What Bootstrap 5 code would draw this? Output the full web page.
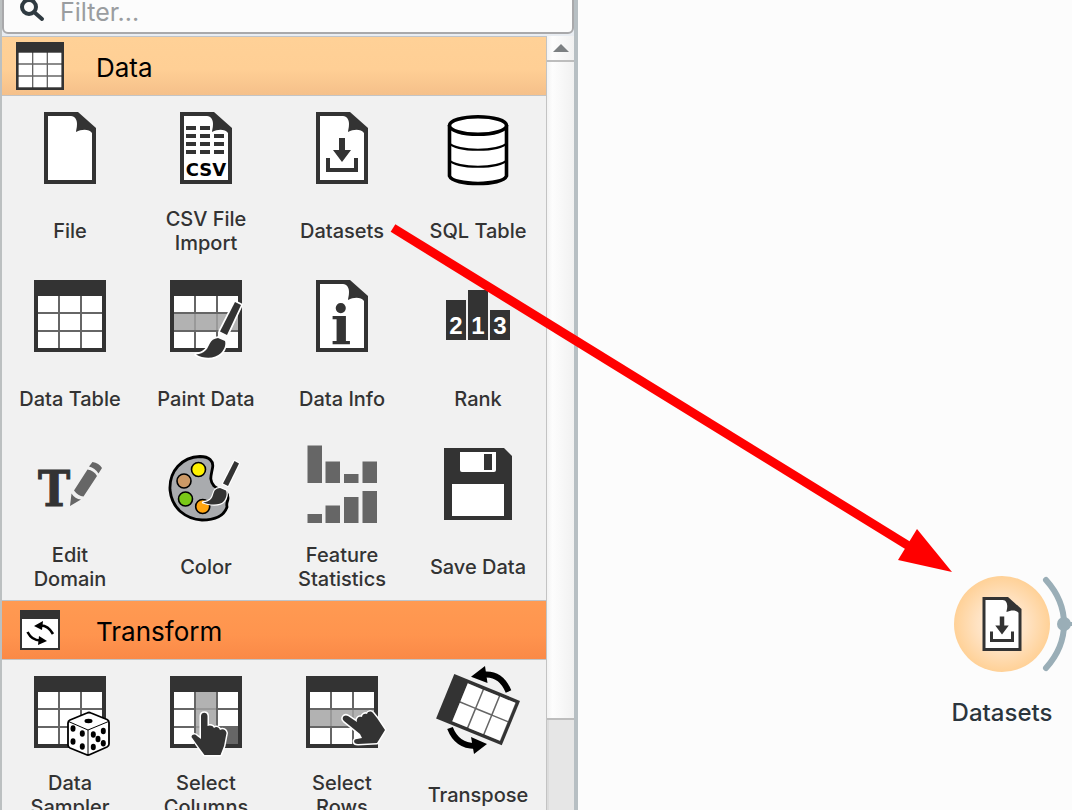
<!DOCTYPE html>
<html lang="en">
<head>
<meta charset="utf-8">
<meta name="viewport" content="width=device-width, initial-scale=1">
<title>Workflow editor</title>
<link href="https://cdn.jsdelivr.net/npm/bootstrap@5.3.0/dist/css/bootstrap.min.css" rel="stylesheet">
<style>
body { font-family: Inter, "Liberation Sans", sans-serif; background: #fcfcfc; color: #333; }
.toolbox { width: 578px; background: #e9edf2; border-left: 2px solid #bcc0c1; border-right: 4px solid #b7bfc3; }
.filter-box { height: 44px; margin-top: -10px; border: 2px solid #a9a9ab; border-radius: 6px; background: #fcfcfc; }
.filter-box input { font-size: 25px; line-height: 32px; color: #333; box-shadow: none; }
.filter-box input::placeholder { color: #9a9da0; opacity: 1; }
.tool-area { margin-top: 2px; }
.tool-list { background: #f1f1f1; }
.group-head { height: 60px; border-top: 1px solid #bfc3c8; border-bottom: 1px solid #c4c4c4; font-size: 26px; line-height: 32px; color: #000; padding-left: 14px; gap: 32px; }
.head-data { background: linear-gradient(#ffd197 0%, #ffcf95 55%, #f5c08a 100%); }
.head-transform { background: linear-gradient(#ff9a52 0%, #ff944e 60%, #fa8947 100%); }
.tool-grid { display: grid; grid-template-columns: repeat(4, 1fr); }
.tool { height: 168px; padding: 4px 0 0; font-size: 20px; font-weight: 500; line-height: 24px; color: #333; }
.tool-text { padding-top: 2px; }
.tool-label { max-width: 108px; }
.scroller { width: 28px; border-left: 1px solid #c3c3c3; background: #e6e6e6; box-shadow: inset 2px 0 #dcdcdc; }
.scroll-up { height: 26px; border-bottom: 2px solid #bdbdbd; }
.scroll-face { background: linear-gradient(90deg, #f3f3f3, #fdfdfd 20%, #f1f1f1); }
.scroll-thumb { height: 88%; border-bottom: 2px solid #bdbdbd; }
.node { left: 364px; top: 576px; width: 120px; }
.node-label { font-size: 24px; font-weight: 500; line-height: 28px; color: #2b353c; margin-top: 27px; }
.pointer-line { left: 0; top: 0; z-index: 5; pointer-events: none; }
</style>
<script src="https://cdn.jsdelivr.net/npm/bootstrap@5.3.0/dist/js/bootstrap.bundle.min.js"></script>
</head>
<body class="vh-100 overflow-hidden position-relative">
<svg width="0" height="0" class="position-absolute" aria-hidden="true">
  <symbol id="table" viewBox="0 0 96 96">
    <path fill="#333" d="M12 12h72v72H12z"/><path fill="#666" d="M16 28h64v52H16z"/>
    <path fill="#fff" d="M16 28h20v16H16zM38 28h20v16H38zM60 28h20v16H60zM16 46h20v16H16zM38 46h20v16H38zM60 46h20v16H60zM16 64h20v16H16zM38 64h20v16H38zM60 64h20v16H60z"/>
  </symbol>
  <symbol id="doc" viewBox="0 0 96 96">
    <path fill="#333" d="M22 12H56L74 28V84H22z"/>
    <path fill="#fff" d="M26 16H49C53 16 55 20 55 24C55 28 54 30 54 32C60 29 67 29 70 33V80H26z"/>
  </symbol>
  <symbol id="dataset" viewBox="0 0 96 96">
    <use href="#doc"/>
    <path fill="#333" d="M45 38h6v12h6L48 62L39 50h6zM32 58h4v10h24V58h4v14H32z"/>
  </symbol>
</svg>
<div class="d-flex h-100">
  <aside class="toolbox d-flex flex-column flex-shrink-0 h-100">
    <div class="filter-box d-flex align-items-center flex-shrink-0">
      <svg width="28" height="28" viewBox="0 0 28 28" class="ms-3 flex-shrink-0" fill="none" stroke="#2f3a41" aria-hidden="true"><circle cx="9" cy="9" r="7" stroke-width="4"/><path d="M14 14l8 7" stroke-width="4" stroke-linecap="round"/></svg>
      <input class="form-control border-0 bg-transparent p-0 ps-2 ms-1" type="text" placeholder="Filter..." aria-label="Filter">
    </div>
    <div class="tool-area d-flex flex-grow-1 overflow-hidden">
      <div class="tool-list flex-grow-1 overflow-hidden">
        <div class="group-head head-data d-flex align-items-center">
          <svg width="48" height="48" viewBox="12 12 72 72" aria-hidden="true"><use href="#table" width="96" height="96"/></svg>
          <span class="pt-1">Data</span>
        </div>
        <div class="tool-grid">
          <button type="button" class="tool btn border-0 rounded-0 d-flex flex-column align-items-center">
            <svg width="96" height="96" class="flex-shrink-0" viewBox="0 0 96 96"><use href="#doc"/></svg>
            <span class="tool-text flex-grow-1 d-flex align-items-center"><span class="tool-label">File</span></span>
          </button>
          <button type="button" class="tool btn border-0 rounded-0 d-flex flex-column align-items-center">
            <svg width="96" height="96" class="flex-shrink-0" viewBox="0 0 96 96"><use href="#doc"/><path fill="#333" d="M28 26h10v4H28zM42 26h10v4H42zM28 34h10v4H28zM42 34h10v4H42zM56 34h10v4H56zM28 42h10v4H28zM42 42h10v4H42zM56 42h10v4H56zM28 50h10v4H28zM42 50h10v4H42zM56 50h10v4H56z"/><text x="48" y="76" text-anchor="middle" font-family="DejaVu Sans, sans-serif" font-weight="700" font-size="18" fill="#000">CSV</text></svg>
            <span class="tool-text flex-grow-1 d-flex align-items-center"><span class="tool-label">CSV File Import</span></span>
          </button>
          <button type="button" class="tool btn border-0 rounded-0 d-flex flex-column align-items-center">
            <svg width="96" height="96" class="flex-shrink-0" viewBox="0 0 96 96"><use href="#dataset"/></svg>
            <span class="tool-text flex-grow-1 d-flex align-items-center"><span class="tool-label">Datasets</span></span>
          </button>
          <button type="button" class="tool btn border-0 rounded-0 d-flex flex-column align-items-center">
            <svg width="96" height="96" class="flex-shrink-0" viewBox="0 0 96 96"><g fill="#fff" stroke="#000" stroke-width="3.6"><path d="M19.500 25V76C23 86 73 86 76.500 76V25"/><ellipse cx="48" cy="25.500" rx="28.500" ry="8.800"/><path fill="none" stroke-width="2" d="M19 43C27 52 69 52 77 43M19 60C27 69 69 69 77 60"/></g></svg>
            <span class="tool-text flex-grow-1 d-flex align-items-center"><span class="tool-label text-nowrap">SQL Table</span></span>
          </button>
          <button type="button" class="tool btn border-0 rounded-0 d-flex flex-column align-items-center">
            <svg width="96" height="96" class="flex-shrink-0" viewBox="0 0 96 96"><use href="#table"/></svg>
            <span class="tool-text flex-grow-1 d-flex align-items-center"><span class="tool-label text-nowrap">Data Table</span></span>
          </button>
          <button type="button" class="tool btn border-0 rounded-0 d-flex flex-column align-items-center">
            <svg width="96" height="96" class="flex-shrink-0 overflow-visible" viewBox="0 0 96 96"><use href="#table"/><path fill="#b2b2b2" d="M16 46h64v16H16z"/><path fill="#999" d="M36 46h2v16h-2zM58 46h2v16h-2z"/><g fill="#333" stroke="#fff" stroke-width="3.500" stroke-linejoin="round" paint-order="stroke"><path d="M77 34L83 37L69 67L62 63.500z"/><path d="M60 70C51 71 52 78 48 82C45 85 42 86 38 86.500C46 91 57 91 63 85C67 81 68 76 67 73z"/></g></svg>
            <span class="tool-text flex-grow-1 d-flex align-items-center"><span class="tool-label text-nowrap">Paint Data</span></span>
          </button>
          <button type="button" class="tool btn border-0 rounded-0 d-flex flex-column align-items-center">
            <svg width="96" height="96" class="flex-shrink-0" viewBox="0 0 96 96"><use href="#doc"/><text x="47" y="76" text-anchor="middle" font-family="DejaVu Serif, serif" font-weight="700" font-size="54" fill="#333">i</text></svg>
            <span class="tool-text flex-grow-1 d-flex align-items-center"><span class="tool-label text-nowrap">Data Info</span></span>
          </button>
          <button type="button" class="tool btn border-0 rounded-0 d-flex flex-column align-items-center">
            <svg width="96" height="96" class="flex-shrink-0" viewBox="0 0 96 96"><path fill="#333" d="M16 32h20v40H16zM38 22h20v50H38zM60 42h20v30H60z"/><g font-family="Liberation Sans, sans-serif" font-weight="700" font-size="24" fill="#fff" text-anchor="middle"><text x="26" y="66">2</text><text x="48" y="66">1</text><text x="70" y="66">3</text></g></svg>
            <span class="tool-text flex-grow-1 d-flex align-items-center"><span class="tool-label">Rank</span></span>
          </button>
          <button type="button" class="tool btn border-0 rounded-0 d-flex flex-column align-items-center">
            <svg width="96" height="96" class="flex-shrink-0" viewBox="0 0 96 96"><text x="32" y="70" text-anchor="middle" font-family="DejaVu Serif Condensed, DejaVu Serif, serif" font-weight="700" font-size="48" fill="#333" stroke="#333">T</text><path fill="#666" d="M70.500 26Q77 27 80 32L76.500 37.500Q73 32 67 30.500zM65.500 33.500Q72 34.500 75 40L61.500 60.500Q56 60 52 54.500zM49.500 57.500Q53 63 59 63.500L48 70z"/></svg>
            <span class="tool-text flex-grow-1 d-flex align-items-center"><span class="tool-label">Edit<br>Domain</span></span>
          </button>
          <button type="button" class="tool btn border-0 rounded-0 d-flex flex-column align-items-center">
            <svg width="96" height="96" class="flex-shrink-0" viewBox="0 0 96 96"><path fill="#a9abae" stroke="#000" stroke-width="2.800" d="M42 20.500C51 20.500 56 25 54.500 32C53 40 51 44 56 50C62 55 70 53 70 62C70 66 68 66 69 71C66 80 57 84 44 84C28 83 14 73 12 54C11 35 24 21 42 20.500z"/><g stroke="#000" stroke-width="1.600"><circle cx="40.500" cy="33.500" r="7" fill="#fff200"/><circle cx="26" cy="45" r="7" fill="#c96"/><circle cx="27.500" cy="63" r="7" fill="#7ac917"/><circle cx="44.700" cy="70.500" r="7" fill="#ffa510"/></g><g fill="#333" stroke="#fff" stroke-width="2.400" stroke-linejoin="round" paint-order="stroke"><path d="M76.500 25L81 27.500L70 50L65 47.500z"/><path d="M62 52C54 53 57 58 53 63C51 65 49 66 45 66.500C51 69 62 70 66 65C69 61 69 57 68 54.500z"/></g></svg>
            <span class="tool-text flex-grow-1 d-flex align-items-center"><span class="tool-label">Color</span></span>
          </button>
          <button type="button" class="tool btn border-0 rounded-0 d-flex flex-column align-items-center">
            <svg width="96" height="96" class="flex-shrink-0" viewBox="0 0 96 96"><path fill="#666" d="M13.500 9.500H28V47H13.500zM31.500 25.500H46V47H31.500zM50 38H64.500V47H50zM68.500 25.500H83V47H68.500zM13.500 78H28V87H13.500zM31.500 69.500H46V87H31.500zM50 61H64.500V87H50zM68.500 55H83V87H68.500z"/></svg>
            <span class="tool-text flex-grow-1 d-flex align-items-center"><span class="tool-label">Feature Statistics</span></span>
          </button>
          <button type="button" class="tool btn border-0 rounded-0 d-flex flex-column align-items-center">
            <svg width="96" height="96" class="flex-shrink-0" viewBox="0 0 96 96"><path fill="#333" d="M14 12H74L82 20V84H14z"/><path fill="#fff" d="M30 16H66V34q0 2-2 2H32q-2 0-2-2zM22 48H74V80H22z"/><path fill="#333" d="M54 18h8v16h-8z"/></svg>
            <span class="tool-text flex-grow-1 d-flex align-items-center"><span class="tool-label text-nowrap">Save Data</span></span>
          </button>
        </div>
        <div class="group-head head-transform d-flex align-items-center">
          <svg width="48" height="48" viewBox="0 0 48 48" aria-hidden="true"><path fill="#333" d="M4 4h40v40H4z"/><path fill="#fff" d="M6 13h36v29H6z"/><path fill="none" stroke="#000" stroke-width="2.600" d="M24 19.500Q32 19 37 28M11.500 26Q16 34.500 24 34.500"/><path d="M18 20L27 15L26 24zM31 35L23 30L22 39z"/></svg>
          <span class="pt-1">Transform</span>
        </div>
        <div class="tool-grid">
          <button type="button" class="tool btn border-0 rounded-0 d-flex flex-column align-items-center">
            <svg width="96" height="96" class="flex-shrink-0" viewBox="0 0 96 96"><use href="#table"/><path fill="#fff" stroke="#000" stroke-width="1.800" stroke-linejoin="round" d="M65 49Q67 48 69 49L85 55.500Q87 56.500 87 58.500V80Q87 82 85 83L68 90.500Q66 91.500 64 90.500L48 84Q46 83 46 81V59Q46 57 48 56z"/><path fill="none" stroke="#000" d="M46.500 57.500L66 66L86.500 57.500M66 66V91"/><ellipse cx="66.500" cy="57" rx="4" ry="2.200"/><g><ellipse cx="51" cy="64.500" rx="2.500" ry="3.300"/><ellipse cx="60.300" cy="69.500" rx="2.500" ry="3.300"/><ellipse cx="51" cy="77.500" rx="2.500" ry="3.300"/><ellipse cx="60.300" cy="82.500" rx="2.500" ry="3.300"/><ellipse cx="71.300" cy="70.500" rx="2.500" ry="3.300"/><ellipse cx="81.300" cy="67" rx="2.500" ry="3.300"/><ellipse cx="76" cy="75" rx="2.500" ry="3.300"/><ellipse cx="71.300" cy="83" rx="2.500" ry="3.300"/><ellipse cx="81.300" cy="79.300" rx="2.500" ry="3.300"/></g></svg>
            <span class="tool-text flex-grow-1 d-flex align-items-center"><span class="tool-label">Data<br>Sampler</span></span>
          </button>
          <button type="button" class="tool btn border-0 rounded-0 d-flex flex-column align-items-center">
            <svg width="96" height="96" class="flex-shrink-0" viewBox="0 0 96 96"><use href="#table"/><path fill="#b2b2b2" d="M38 28h20v52H38z"/><path fill="#999" d="M38 44h20v2H38zM38 62h20v2H38z"/><path fill="#666" d="M60 64h20v16H60z"/><path fill="#333" stroke="#fff" stroke-width="3" paint-order="stroke" stroke-linejoin="round" d="M43 52C43 47.500 49.500 47.500 49.500 52V62C51 61 55 61 56 64C58 62 61 63 62 66C65 64 68 66 68.500 69L66 82L62.500 91H46.500L42 85L37 78L33.500 73C34 70 37 70 39 72L43 75z"/></svg>
            <span class="tool-text flex-grow-1 d-flex align-items-center"><span class="tool-label">Select Columns</span></span>
          </button>
          <button type="button" class="tool btn border-0 rounded-0 d-flex flex-column align-items-center">
            <svg width="96" height="96" class="flex-shrink-0" viewBox="0 0 96 96"><use href="#table"/><path fill="#b2b2b2" d="M16 46h64v16H16z"/><path fill="#999" d="M36 46h2v16h-2zM58 46h2v16h-2z"/><path fill="#333" stroke="#fff" stroke-width="3" paint-order="stroke" stroke-linejoin="round" d="M50 57C47 54 50 50 54 52L63 58C62 54 65 52 68 53C68 50 71 49 73 50C74 47 77 47 79 49L83 54L91 66L83 79L64 80C59 80 59 75 63 75L68 74L66 70z"/></svg>
            <span class="tool-text flex-grow-1 d-flex align-items-center"><span class="tool-label">Select<br>Rows</span></span>
          </button>
          <button type="button" class="tool btn border-0 rounded-0 d-flex flex-column align-items-center">
            <svg width="96" height="96" class="flex-shrink-0" viewBox="0 0 96 96"><g transform="translate(24.300 10) rotate(22.300)"><path fill="#333" d="M0 0h71v48H0z"/><path fill="#666" d="M16 3.500h52v41H16z"/><path fill="#fff" d="M16 3.500h16v19.500H16zM33.500 3.500h16v19.500h-16zM51 3.500h16.500v19.500H51zM16 24.500h16v20H16zM33.500 24.500h16v20h-16zM51 24.500h16.500v20H51z"/></g><path fill="none" stroke="#000" stroke-width="6" d="M54 10.500Q71 9 78.500 27.500M20 64Q27 82 45 82"/><path d="M41 12.700L55 2L57.500 19zM57 80L41 73L44 90z"/></svg>
            <span class="tool-text flex-grow-1 d-flex align-items-center"><span class="tool-label">Transpose</span></span>
          </button>
        </div>
      </div>
      <div class="scroller d-flex flex-column flex-shrink-0">
        <button type="button" class="scroll-up scroll-face border-top-0 border-start-0 border-end-0 p-0 d-flex align-items-center justify-content-center flex-shrink-0" aria-label="Scroll up"><svg width="16" height="8" viewBox="0 0 16 8"><path fill="#7c8082" d="M0 8L8 0L16 8z"/></svg></button>
        <div class="flex-grow-1"><div class="scroll-thumb scroll-face"></div></div>
      </div>
    </div>
  </aside>
  <main class="flex-grow-1 position-relative overflow-hidden">
    <div class="node position-absolute text-center">
      <svg width="120" height="96" viewBox="0 0 120 96" class="d-block overflow-visible" role="img" aria-label="Datasets node">
        <defs><radialGradient id="glow"><stop offset="0" stop-color="#fff0e0"/><stop offset=".5" stop-color="#ffe3c4"/><stop offset="1" stop-color="#ffd197"/></radialGradient></defs>
        <circle cx="60" cy="48" r="48" fill="url(#glow)"/>
        <use href="#dataset" x="24" y="12" width="72" height="72"/>
        <path fill="none" stroke="#9aaeb7" stroke-width="6" stroke-linecap="round" d="M104 4Q122 24 122 48Q122 72 104 92"/>
        <circle cx="122" cy="48" r="7" fill="#9aaeb7"/><path stroke="#9aaeb7" stroke-width="4" d="M122 48h12"/>
      </svg>
      <div class="node-label">Datasets</div>
    </div>
  </main>
</div>
<svg class="pointer-line position-absolute" width="1072" height="810" viewBox="0 0 1072 810" aria-hidden="true"><path stroke="#f00" stroke-width="9" d="M393 228L912 548"/><path fill="#f00" d="M917 529L898 560L952 572z"/></svg>
</body>
</html>
